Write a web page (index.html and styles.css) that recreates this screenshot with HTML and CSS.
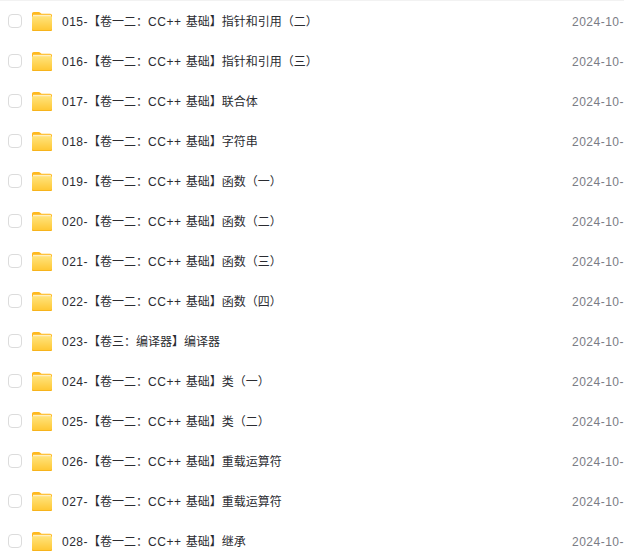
FILE: index.html
```html
<!DOCTYPE html>
<html lang="zh-CN">
<head>
  <meta charset="UTF-8" />
  <title>文件列表</title>
  <link rel="stylesheet" href="styles.css">
</head>
<body>
  <svg class="defs" width="0" height="0" aria-hidden="true">
    <defs>
      <linearGradient id="folder-front" x1="0" y1="0" x2="0" y2="1">
        <stop offset="0" stop-color="#ffe37a" />
        <stop offset="1" stop-color="#ffc630" />
      </linearGradient>
      <symbol id="folder" viewBox="0 0 20 19">
        <path d="M0 1.800C0 .8.800 0 1.800 0h5c.6 0 1.100.3 1.500.7L9.500 1.800h8.700c1 0 1.800.8 1.800 1.800v13.600c0 1-.8 1.800-1.800 1.800H1.800C.8 19 0 18.200 0 17.200z" fill="#ffb91f" />
        <path d="M1 2.800h18v2H1z" fill="#ffefc0" />
        <path d="M0 4.500h20v12.700c0 1-.8 1.800-1.800 1.800H1.800C.8 19 0 18.200 0 17.200z" fill="url(#folder-front)" />
        <path d="M0 17.200c0 1 .8 1.800 1.800 1.800h16.400c1 0 1.800-.8 1.800-1.800v-.2c0 .7-.8 1.200-1.800 1.200H1.800C.8 18.200 0 17.700 0 17z" fill="#f5ae16" />
      </symbol>
    </defs>
  </svg>

  <ul class="list">
    <li class="row"><span class="check"></span><svg class="icon"><use href="#folder" /></svg><span class="name"><span class="lat">015-</span>【卷一二：<span class="lat">CC++</span> 基础】指针和引用（二）</span><span class="date">2024-10-</span></li>
    <li class="row"><span class="check"></span><svg class="icon"><use href="#folder" /></svg><span class="name"><span class="lat">016-</span>【卷一二：<span class="lat">CC++</span> 基础】指针和引用（三）</span><span class="date">2024-10-</span></li>
    <li class="row"><span class="check"></span><svg class="icon"><use href="#folder" /></svg><span class="name"><span class="lat">017-</span>【卷一二：<span class="lat">CC++</span> 基础】联合体</span><span class="date">2024-10-</span></li>
    <li class="row"><span class="check"></span><svg class="icon"><use href="#folder" /></svg><span class="name"><span class="lat">018-</span>【卷一二：<span class="lat">CC++</span> 基础】字符串</span><span class="date">2024-10-</span></li>
    <li class="row"><span class="check"></span><svg class="icon"><use href="#folder" /></svg><span class="name"><span class="lat">019-</span>【卷一二：<span class="lat">CC++</span> 基础】函数（一）</span><span class="date">2024-10-</span></li>
    <li class="row"><span class="check"></span><svg class="icon"><use href="#folder" /></svg><span class="name"><span class="lat">020-</span>【卷一二：<span class="lat">CC++</span> 基础】函数（二）</span><span class="date">2024-10-</span></li>
    <li class="row"><span class="check"></span><svg class="icon"><use href="#folder" /></svg><span class="name"><span class="lat">021-</span>【卷一二：<span class="lat">CC++</span> 基础】函数（三）</span><span class="date">2024-10-</span></li>
    <li class="row"><span class="check"></span><svg class="icon"><use href="#folder" /></svg><span class="name"><span class="lat">022-</span>【卷一二：<span class="lat">CC++</span> 基础】函数（四）</span><span class="date">2024-10-</span></li>
    <li class="row"><span class="check"></span><svg class="icon"><use href="#folder" /></svg><span class="name"><span class="lat">023-</span>【卷三：编译器】编译器</span><span class="date">2024-10-</span></li>
    <li class="row"><span class="check"></span><svg class="icon"><use href="#folder" /></svg><span class="name"><span class="lat">024-</span>【卷一二：<span class="lat">CC++</span> 基础】类（一）</span><span class="date">2024-10-</span></li>
    <li class="row"><span class="check"></span><svg class="icon"><use href="#folder" /></svg><span class="name"><span class="lat">025-</span>【卷一二：<span class="lat">CC++</span> 基础】类（二）</span><span class="date">2024-10-</span></li>
    <li class="row"><span class="check"></span><svg class="icon"><use href="#folder" /></svg><span class="name"><span class="lat">026-</span>【卷一二：<span class="lat">CC++</span> 基础】重载运算符</span><span class="date">2024-10-</span></li>
    <li class="row"><span class="check"></span><svg class="icon"><use href="#folder" /></svg><span class="name"><span class="lat">027-</span>【卷一二：<span class="lat">CC++</span> 基础】重载运算符</span><span class="date">2024-10-</span></li>
    <li class="row"><span class="check"></span><svg class="icon"><use href="#folder" /></svg><span class="name"><span class="lat">028-</span>【卷一二：<span class="lat">CC++</span> 基础】继承</span><span class="date">2024-10-</span></li>
  </ul>
</body>
</html>
```

FILE: styles.css
```css
* {
  margin: 0;
  padding: 0;
  box-sizing: border-box;
}

html, body {
  height: 100%;
  overflow: hidden;
  background: #fff;
}

body {
  border-top: 1px solid #f2f2f2;
  font-family: "Liberation Sans", "Noto Sans CJK SC", sans-serif;
  font-size: 12px;
  line-height: 20px;
  color: #2b2c31;
}

.defs {
  position: absolute;
}

.list {
  list-style: none;
}

.row {
  display: flex;
  align-items: center;
  height: 40px;
  padding-left: 8px;
  white-space: nowrap;
}

.check {
  flex: none;
  width: 14px;
  height: 14px;
  border: 1px solid #dcdcdc;
  border-radius: 4px;
  background: #fff;
}

.icon {
  flex: none;
  width: 20px;
  height: 19px;
  margin-left: 10px;
}

.name {
  flex: none;
  width: 510px;
  margin-left: 10px;
  padding-top: 2px;
  word-spacing: 1px;
}

.lat {
  letter-spacing: 0.5px;
}

.date {
  flex: none;
  padding-top: 2px;
  letter-spacing: 0.5px;
  color: #7a7c85;
}
```
